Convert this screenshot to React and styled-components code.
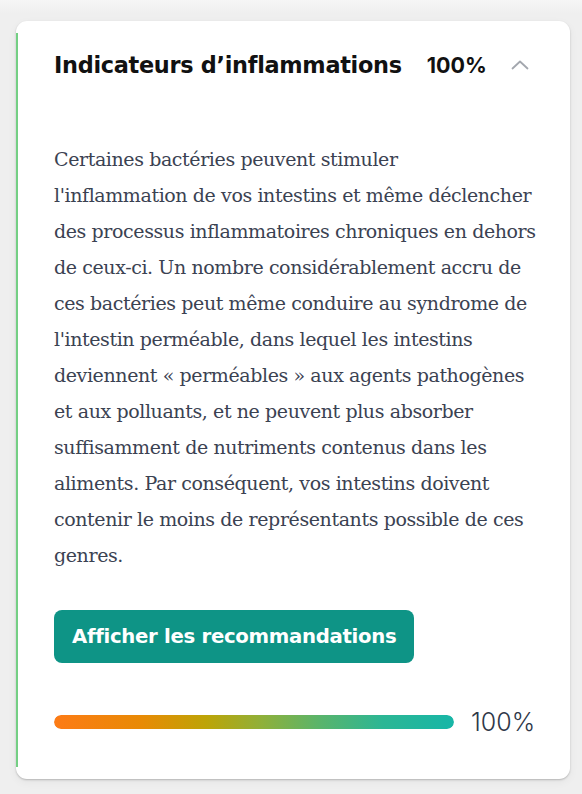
import React, { Fragment } from "react"
import styled, { createGlobalStyle } from "styled-components"

const GlobalStyle = createGlobalStyle`
  html, body {
    margin: 0;
    padding: 0;
    background: #efefef;
  }
`

const Page = styled.div`
  padding: 21px 12px 16px 16px;
  background: linear-gradient(#f6f6f6 0, #efefef 14px);
  min-height: 794px;
  box-sizing: border-box;
`

const Card = styled.section`
  position: relative;
  width: 554px;
  box-sizing: border-box;
  background: #fff;
  border-radius: 11px;
  box-shadow: 0 1px 2px rgba(0, 0, 0, 0.22), 0 3px 10px rgba(0, 0, 0, 0.05);
  padding: 24px 34px 42px 38px;

  &::before {
    content: "";
    position: absolute;
    left: 0;
    top: 12px;
    bottom: 12px;
    width: 2px;
    background: ${(p) => p.$accent};
  }
`

const Header = styled.div`
  display: flex;
  align-items: center;
  height: 40px;
`

const Title = styled.h2`
  margin: 0;
  font-family: "DejaVu Sans", Inter, sans-serif;
  font-weight: 700;
  font-size: 22.4px;
  letter-spacing: -0.3px;
  color: #111;
`

const Score = styled.span`
  margin-left: 25px;
  font-family: Inter, "Noto Sans", sans-serif;
  font-weight: 700;
  font-size: 21.5px;
  color: #111;
`

const Toggle = styled.button`
  margin-left: 24px;
  border: 0;
  padding: 0;
  background: none;
  display: flex;
  align-items: center;
  color: #a3a7ae;
`

const Body = styled.p`
  margin: 56px 0 0;
  font-family: "DejaVu Serif", serif;
  font-size: 19px;
  letter-spacing: -0.4px;
  line-height: 36px;
  white-space: nowrap;
  color: #3b4252;
`

const Action = styled.button`
  margin-top: 37px;
  height: 53px;
  padding: 0 18px;
  border: 0;
  border-radius: 8px;
  background: #0e9486;
  color: #fff;
  font-family: "DejaVu Sans", Inter, sans-serif;
  font-weight: 700;
  font-size: 19.7px;
  letter-spacing: -0.3px;
`

const ProgressRow = styled.div`
  display: flex;
  align-items: center;
  gap: 17px;
  margin-top: 44px;
`

const Track = styled.div`
  width: 400px;
  height: 14px;
  border-radius: 7px;
  background: #eee;
  overflow: hidden;
`

const Fill = styled.div`
  height: 100%;
  border-radius: 7px;
  background: linear-gradient(
    90deg,
    #fd7b16 0%,
    #e88a05 22%,
    #bda407 38%,
    #8fb03a 52%,
    #5bb46a 66%,
    #2cb694 82%,
    #17b6a7 100%
  );
`

const Percent = styled.span`
  font-family: Inter, "Noto Sans", sans-serif;
  font-weight: 300;
  font-size: 25px;
  color: #2f3849;
`

const Chevron = () => (
  <svg width="18" height="10" viewBox="0 0 18 10" fill="none">
    <path d="M1.5 8.5L9 1.5l7.5 7" stroke="currentColor" strokeWidth="1.8" strokeLinecap="round" strokeLinejoin="round" />
  </svg>
)

const lines = [
  "Certaines bactéries peuvent stimuler",
  "l'inflammation de vos intestins et même déclencher",
  "des processus inflammatoires chroniques en dehors",
  "de ceux-ci. Un nombre considérablement accru de",
  "ces bactéries peut même conduire au syndrome de",
  "l'intestin perméable, dans lequel les intestins",
  "deviennent « perméables » aux agents pathogènes",
  "et aux polluants, et ne peuvent plus absorber",
  "suffisamment de nutriments contenus dans les",
  "aliments. Par conséquent, vos intestins doivent",
  "contenir le moins de représentants possible de ces",
  "genres.",
]

const App = () => {
  const score = 100

  return (
    <Page>
      <GlobalStyle />
      <Card $accent="#74cf84">
        <Header>
          <Title>Indicateurs d’inflammations</Title>
          <Score>{score}%</Score>
          <Toggle aria-label="Réduire">
            <Chevron />
          </Toggle>
        </Header>
        <Body>
          {lines.map((line, index) => (
            <Fragment key={index}>
              {index > 0 && <br />}
              {line}
            </Fragment>
          ))}
        </Body>
        <Action>Afficher les recommandations</Action>
        <ProgressRow>
          <Track>
            <Fill style={{ width: `${score}%` }} />
          </Track>
          <Percent>{score}%</Percent>
        </ProgressRow>
      </Card>
    </Page>
  )
}

export default App
